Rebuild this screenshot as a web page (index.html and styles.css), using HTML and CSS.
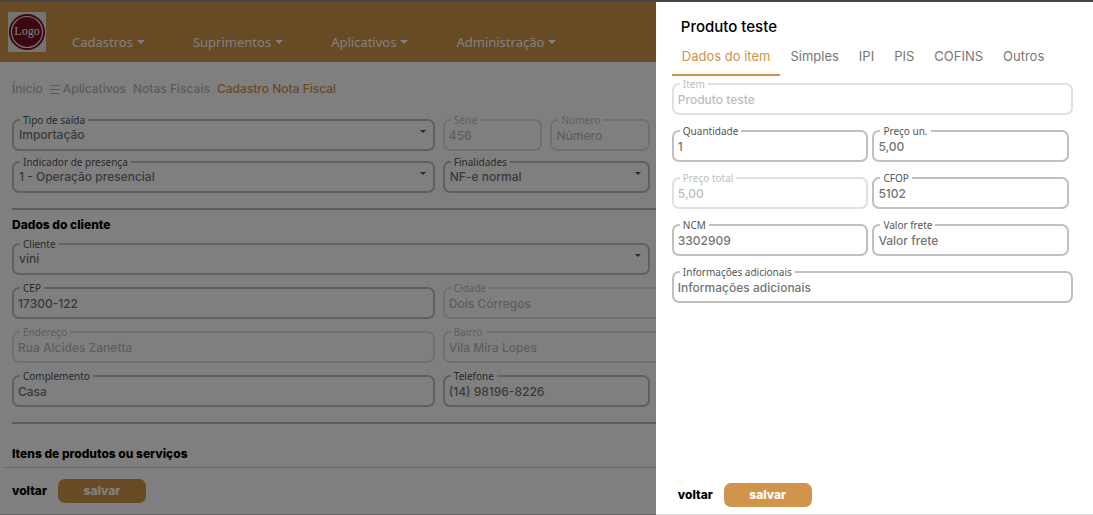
FILE: index.html
```html
<!DOCTYPE html>
<html lang="pt-BR">
<head>
    <meta charset="UTF-8">
    <meta name="viewport" content="width=device-width, initial-scale=1.0">
    <title>Cadastro Nota Fiscal</title>
    <link rel="stylesheet" href="styles.css">
</head>
<body>
    <div class="page">
        <header class="header">
            <a href="#" class="logo">
                <svg width="38" height="40" viewBox="0 0 38 40" role="img" aria-label="Logo">
                    <rect width="38" height="40" fill="#e9e9ef"/>
                    <circle cx="19" cy="20" r="18" fill="#7a0f22"/>
                    <circle cx="19" cy="20" r="15.5" fill="none" stroke="#f3e9ea" stroke-width="1.2"/>
                    <rect x="6" y="15" width="26" height="10" fill="#7a0f22"/>
                    <text x="19" y="23" text-anchor="middle" class="logo-text">Logo</text>
                </svg>
            </a>
            <nav class="menu">
                <a href="#">Cadastros</a>
                <a href="#">Suprimentos</a>
                <a href="#">Aplicativos</a>
                <a href="#">Administração</a>
            </nav>
        </header>

        <main class="content">
            <nav class="breadcrumb">
                <a href="#">Ínicio</a>
                <a href="#" class="with-icon">
                    <svg width="10" height="10" viewBox="0 0 10 10"><path d="M0 1.5h10M0 5.5h10M0 9.5h10" stroke="currentColor"/></svg>
                    Aplicativos
                </a>
                <a href="#">Notas Fiscais</a>
                <a href="#" class="current">Cadastro Nota Fiscal</a>
            </nav>

            <form class="form">
                <div class="grid">
                    <fieldset class="field select span-4">
                        <legend><label for="tipo">Tipo de saída</label></legend>
                        <select id="tipo"><option>Importação</option></select>
                    </fieldset>
                    <fieldset class="field" disabled>
                        <legend><label for="serie">Série</label></legend>
                        <input id="serie" type="text" value="456">
                    </fieldset>
                    <fieldset class="field" disabled>
                        <legend><label for="numero">Número</label></legend>
                        <input id="numero" type="text" placeholder="Número">
                    </fieldset>
                </div>
                <div class="grid">
                    <fieldset class="field select span-4">
                        <legend><label for="presenca">Indicador de presença</label></legend>
                        <select id="presenca"><option>1 - Operação presencial</option></select>
                    </fieldset>
                    <fieldset class="field select span-2">
                        <legend><label for="finalidade">Finalidades</label></legend>
                        <select id="finalidade"><option>NF-e normal</option></select>
                    </fieldset>
                </div>
            </form>

            <hr>
            <h2>Dados do cliente</h2>

            <form class="form client">
                <div class="grid">
                    <fieldset class="field select span-6">
                        <legend><label for="cliente">Cliente</label></legend>
                        <select id="cliente"><option>vini</option></select>
                    </fieldset>
                </div>
                <div class="grid">
                    <fieldset class="field span-4">
                        <legend><label for="cep">CEP</label></legend>
                        <input id="cep" type="text" value="17300-122">
                    </fieldset>
                    <fieldset class="field span-6" disabled>
                        <legend><label for="cidade">Cidade</label></legend>
                        <input id="cidade" type="text" value="Dois Córregos">
                    </fieldset>
                </div>
                <div class="grid">
                    <fieldset class="field span-4" disabled>
                        <legend><label for="endereco">Endereço</label></legend>
                        <input id="endereco" type="text" value="Rua Alcides Zanetta">
                    </fieldset>
                    <fieldset class="field span-6" disabled>
                        <legend><label for="bairro">Bairro</label></legend>
                        <input id="bairro" type="text" value="Vila Mira Lopes">
                    </fieldset>
                </div>
                <div class="grid">
                    <fieldset class="field span-4">
                        <legend><label for="complemento">Complemento</label></legend>
                        <input id="complemento" type="text" value="Casa">
                    </fieldset>
                    <fieldset class="field span-2">
                        <legend><label for="telefone">Telefone</label></legend>
                        <input id="telefone" type="text" value="(14) 98196-8226">
                    </fieldset>
                </div>
            </form>

            <hr>
            <h2 class="items-title">Itens de produtos ou serviços</h2>
        </main>

        <footer class="actions page-actions">
            <button type="button" class="btn-back">voltar</button>
            <button type="button" class="btn-save">salvar</button>
        </footer>
    </div>

    <div class="backdrop"></div>

    <aside class="drawer">
        <h1>Produto teste</h1>
        <div class="tabs" role="tablist">
            <button type="button" role="tab" class="tab active" aria-selected="true">Dados do item</button>
            <button type="button" role="tab" class="tab">Simples</button>
            <button type="button" role="tab" class="tab">IPI</button>
            <button type="button" role="tab" class="tab">PIS</button>
            <button type="button" role="tab" class="tab">COFINS</button>
            <button type="button" role="tab" class="tab">Outros</button>
        </div>
        <form class="item-form">
            <fieldset class="field" disabled>
                <legend><label for="item">Item</label></legend>
                <input id="item" type="text" value="Produto teste">
            </fieldset>
            <div class="pair">
                <fieldset class="field">
                    <legend><label for="quantidade">Quantidade</label></legend>
                    <input id="quantidade" type="text" value="1">
                </fieldset>
                <fieldset class="field">
                    <legend><label for="preco">Preço un.</label></legend>
                    <input id="preco" type="text" value="5,00">
                </fieldset>
            </div>
            <div class="pair">
                <fieldset class="field" disabled>
                    <legend><label for="total">Preço total</label></legend>
                    <input id="total" type="text" value="5,00">
                </fieldset>
                <fieldset class="field">
                    <legend><label for="cfop">CFOP</label></legend>
                    <input id="cfop" type="text" value="5102">
                </fieldset>
            </div>
            <div class="pair">
                <fieldset class="field">
                    <legend><label for="ncm">NCM</label></legend>
                    <input id="ncm" type="text" value="3302909">
                </fieldset>
                <fieldset class="field">
                    <legend><label for="frete">Valor frete</label></legend>
                    <input id="frete" type="text" placeholder="Valor frete">
                </fieldset>
            </div>
            <fieldset class="field">
                <legend><label for="info">Informações adicionais</label></legend>
                <input id="info" type="text" placeholder="Informações adicionais">
            </fieldset>
        </form>
        <div class="actions drawer-actions">
            <button type="button" class="btn-back">voltar</button>
            <button type="button" class="btn-save">salvar</button>
        </div>
    </aside>
</body>
</html>
```

FILE: styles.css
```css
* {
    box-sizing: border-box;
}

body {
    margin: 0;
    font-family: Inter, sans-serif;
    font-size: 12px;
    font-weight: 500;
    line-height: 16px;
    color: #000;
    background: #fff;
    overflow: hidden;
}

a {
    color: inherit;
    text-decoration: none;
}

button {
    padding: 0;
    border: none;
    background: none;
    font: inherit;
    cursor: pointer;
}

.page {
    display: flex;
    flex-direction: column;
    height: 100vh;
    border-bottom: 1px solid #ccc;
}

.header {
    display: flex;
    flex-shrink: 0;
    align-items: flex-end;
    gap: 26px;
    height: 62px;
    padding: 0 8px 10px;
    border-top: 2px solid #888;
    background: #d0944a;
}

.logo svg {
    display: block;
}

.logo-text {
    font-family: "Liberation Serif", serif;
    font-size: 12px;
    font-weight: 400;
    fill: #fff;
}

.menu {
    display: flex;
    gap: 48px;
    font-family: "Noto Sans", sans-serif;
    font-size: 13px;
    font-weight: 400;
    line-height: 20px;
    color: #fff;
}

.menu a {
    display: flex;
    align-items: center;
    gap: 4px;
}

.menu a::after {
    content: "";
    border: 4px solid transparent;
    border-top-color: #fff;
    border-bottom: 0;
}

.content {
    flex: 1;
    min-height: 0;
    padding: 19px 12px 0;
}

.breadcrumb {
    display: flex;
    gap: 7px;
    margin-bottom: 17px;
    color: #b8b8b8;
}

.breadcrumb .with-icon {
    display: flex;
    align-items: center;
    gap: 3px;
}

.breadcrumb .current {
    color: #d0944a;
}

.form {
    display: flex;
    flex-direction: column;
    gap: 5px;
}

.client {
    gap: 7px;
}

.grid {
    display: grid;
    grid-template-columns: repeat(10, 1fr);
    gap: 8px;
}

.span-2 {
    grid-column: span 2;
}

.span-4 {
    grid-column: span 4;
}

.span-6 {
    grid-column: span 6;
}

/* outlined field, the legend cuts the top border */
.field {
    position: relative;
    min-width: 0;
    margin: 0;
    padding: 0 4px;
    border: 2px solid #c0c0c0;
    border-radius: 7px;
}

.field legend {
    margin-left: 2px;
    padding: 0 3px;
    font-family: "Noto Sans", sans-serif;
    font-size: 10px;
    font-weight: 400;
    line-height: 12px;
    color: #555;
}

.field label {
    display: block;
}

.field input,
.field select {
    display: block;
    width: 100%;
    height: 18px;
    margin: 0 0 5px;
    padding: 0;
    border: none;
    outline: none;
    background: none;
    font: inherit;
    color: #757575;
    appearance: none;
}

.field select {
    padding-left: 1px;
}

.field ::placeholder {
    color: inherit;
    opacity: 1;
}

.field.select::after {
    content: "";
    position: absolute;
    top: 4px;
    right: 7px;
    border: 3px solid transparent;
    border-top-color: #555;
    border-bottom: 0;
}

.field:disabled {
    border-color: #e0e0e0;
}

.field:disabled legend,
.field:disabled input {
    color: #bdbdbd;
}

hr {
    width: 100%;
    height: 2px;
    margin: 15px 0 7px;
    border: none;
    background: #b8b8b8;
}

h2 {
    margin: 0 0 5px;
    font-size: 12px;
    line-height: 16px;
    font-weight: 800;
}

.items-title {
    margin-top: 22px;
}

.actions {
    display: flex;
    align-items: center;
    gap: 11px;
    font-size: 12px;
}

.page-actions {
    flex-shrink: 0;
    height: 47px;
    margin-left: 4px;
    padding-left: 8px;
    border-top: 1px solid #ccc;
}

.btn-back,
.btn-save {
    font-weight: 800;
}

.btn-save {
    width: 88px;
    height: 24px;
    border-radius: 7px;
    color: #fff;
    background: #d0944a;
}

.backdrop {
    position: fixed;
    inset: 0;
    background: rgba(0, 0, 0, 0.5);
}

.drawer {
    position: fixed;
    top: 0;
    right: 0;
    bottom: 0;
    display: flex;
    flex-direction: column;
    width: 40%;
    padding: 0 20px 7px 16px;
    border-top: 2px solid #444;
    border-bottom: 1px solid #ddd;
    background: #fff;
}

h1 {
    margin: 15px 9px 9px;
    font-size: 15px;
    line-height: 20px;
    font-weight: 500;
}

.tabs {
    display: flex;
    margin-bottom: 2px;
}

.tab {
    height: 30px;
    padding: 0 10px 8px;
    border-bottom: 2px solid transparent;
    font-size: 13px;
    font-weight: 400;
    color: #777;
}

.tab.active {
    border-color: #d0944a;
    color: #d0944a;
}

.item-form {
    display: flex;
    flex-direction: column;
    gap: 10px;
}

.pair {
    display: grid;
    grid-template-columns: 1fr 1fr;
    gap: 4px;
    padding-right: 4px;
}

.drawer-actions {
    margin-top: auto;
    padding-left: 6px;
}
```
